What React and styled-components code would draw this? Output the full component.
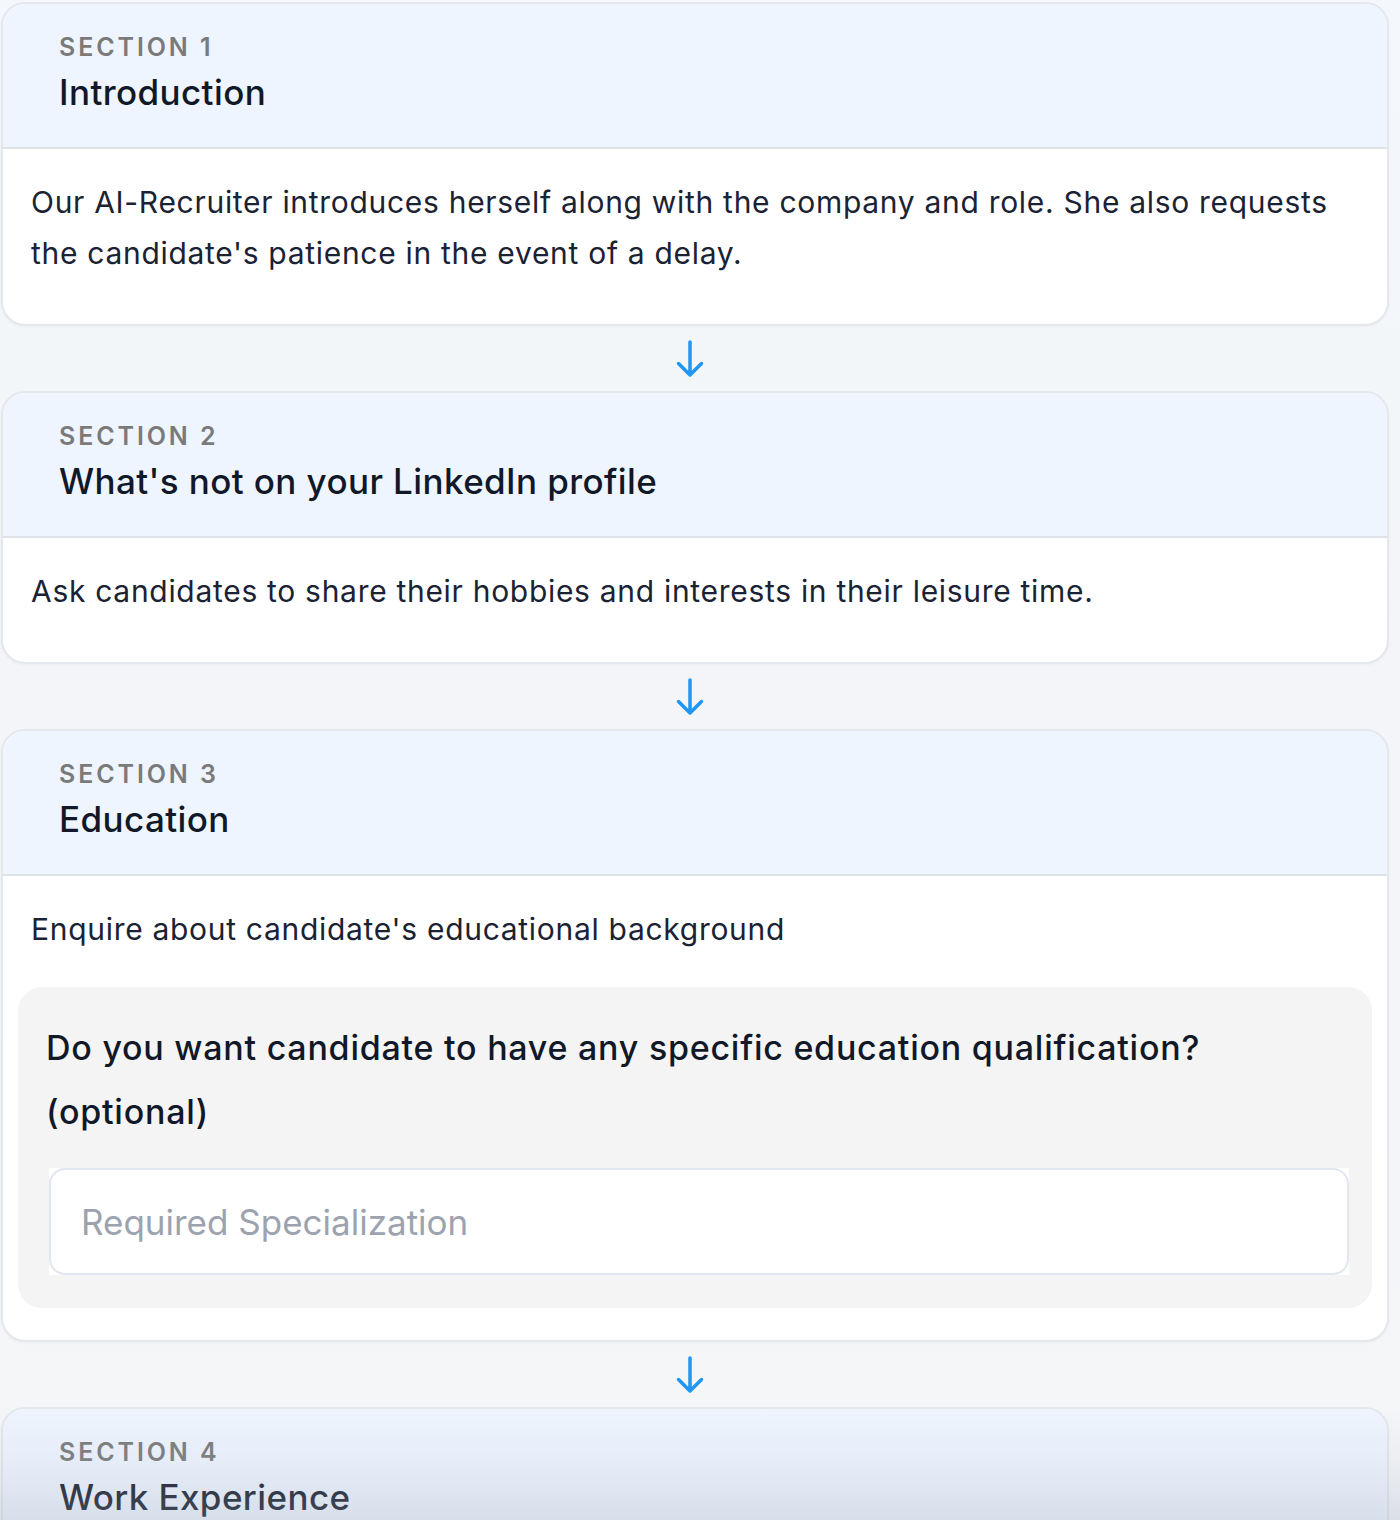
import React from "react";
import styled, { createGlobalStyle } from "styled-components";

const GlobalStyle = createGlobalStyle`
  body {
    margin: 0;
    background: #f3f5f8;
    font-family: Inter, "Noto Sans", sans-serif;
    -webkit-font-smoothing: antialiased;
  }
`;

const Page = styled.div`
  position: relative;
  width: 1400px;
  height: 1520px;
  overflow: hidden;
  box-sizing: border-box;
  padding: 2px 11px 0 1px;
  background: linear-gradient(180deg, #f4f7fb 0%, #f3f5f8 50%, #f5f6f8 100%);
`;

const Flow = styled.div`
  display: flex;
  flex-direction: column;
`;

const Card = styled.div`
  flex-shrink: 0;
  background: #ffffff;
  border: 2px solid #e4e7ec;
  border-radius: 24px;
  overflow: hidden;
  box-shadow: 0 1px 3px rgba(15, 23, 42, 0.04);
`;

const Header = styled.div`
  background: #eef5ff;
  border-bottom: 2px solid #dfe3e8;
  padding: 25px 54px 0 56px;
  height: 118px;
`;

const Label = styled.div`
  font-size: 25px;
  font-weight: 600;
  letter-spacing: 2.9px;
  color: #7a7a7a;
  line-height: 36px;
`;

const Title = styled.div`
  font-size: 35px;
  font-weight: 500;
  letter-spacing: 0.4px;
  color: #111827;
  line-height: 54px;
`;

const Body = styled.div`
  padding: 28px 28px 45px;
`;

const Text = styled.p`
  margin: 0;
  font-size: 30px;
  letter-spacing: 0.7px;
  line-height: 51px;
  color: #1a2233;
`;

const Question = styled.div`
  margin: 32px -13px -13px;
  background: #f4f4f5;
  border-radius: 24px;
  padding: 29px 23px 33px 28px;
`;

const QuestionText = styled.p`
  margin: 0;
  padding-right: 40px;
  font-size: 34px;
  font-weight: 500;
  letter-spacing: 0.75px;
  line-height: 64px;
  color: #111827;
`;

const FieldWrap = styled.div`
  margin: 24px 0 0 3px;
  background: #ffffff;
`;

const Field = styled.input`
  display: block;
  box-sizing: border-box;
  width: 100%;
  height: 107px;
  border: 2px solid #e1e5ef;
  border-radius: 16px;
  padding: 0 30px;
  font-family: inherit;
  font-size: 35px;
  color: #111827;
  background: #ffffff;
  outline: none;
  &::placeholder {
    color: #9ca3af;
  }
`;

const Connector = styled.div`
  height: 65px;
  padding-right: 10px;
  display: flex;
  align-items: center;
  justify-content: center;
`;

/* soft shade over the bottom edge of the scroll area */
const BottomFade = styled.div`
  position: absolute;
  left: 0;
  right: 0;
  bottom: 0;
  height: 115px;
  pointer-events: none;
  background: linear-gradient(
    180deg,
    rgba(165, 175, 192, 0) 0%,
    rgba(165, 175, 192, 0.12) 50%,
    rgba(165, 175, 192, 0.32) 100%
  );
`;

const DownArrow = () => (
  <svg width="30" height="40" viewBox="0 0 30 40" fill="none">
    <path
      d="M15 3v33M3.5 24.5L15 36l11.5-11.5"
      stroke="#2196f3"
      strokeWidth="3.5"
      strokeLinecap="round"
      strokeLinejoin="round"
    />
  </svg>
);

const sections = [
  {
    n: 1,
    title: "Introduction",
    text: "Our AI-Recruiter introduces herself along with the company and role. She also requests the candidate's patience in the event of a delay.",
  },
  {
    n: 2,
    title: "What's not on your LinkedIn profile",
    text: "Ask candidates to share their hobbies and interests in their leisure time.",
  },
  {
    n: 3,
    title: "Education",
    text: "Enquire about candidate's educational background",
    question:
      "Do you want candidate to have any specific education qualification? (optional)",
    placeholder: "Required Specialization",
  },
  { n: 4, title: "Work Experience" },
];

function Section({ n, title, text, question, placeholder }) {
  return (
    <Card>
      <Header>
        <Label>SECTION {n}</Label>
        <Title>{title}</Title>
      </Header>
      {text && (
        <Body>
          <Text>{text}</Text>
          {question && (
            <Question>
              <QuestionText>{question}</QuestionText>
              <FieldWrap>
                <Field placeholder={placeholder} />
              </FieldWrap>
            </Question>
          )}
        </Body>
      )}
    </Card>
  );
}

export default function App() {
  return (
    <>
      <GlobalStyle />
      <Page>
        <Flow>
          {sections.map((s, i) => (
            <React.Fragment key={s.n}>
              {i > 0 && (
                <Connector>
                  <DownArrow />
                </Connector>
              )}
              <Section {...s} />
            </React.Fragment>
          ))}
        </Flow>
        <BottomFade />
      </Page>
    </>
  );
}
